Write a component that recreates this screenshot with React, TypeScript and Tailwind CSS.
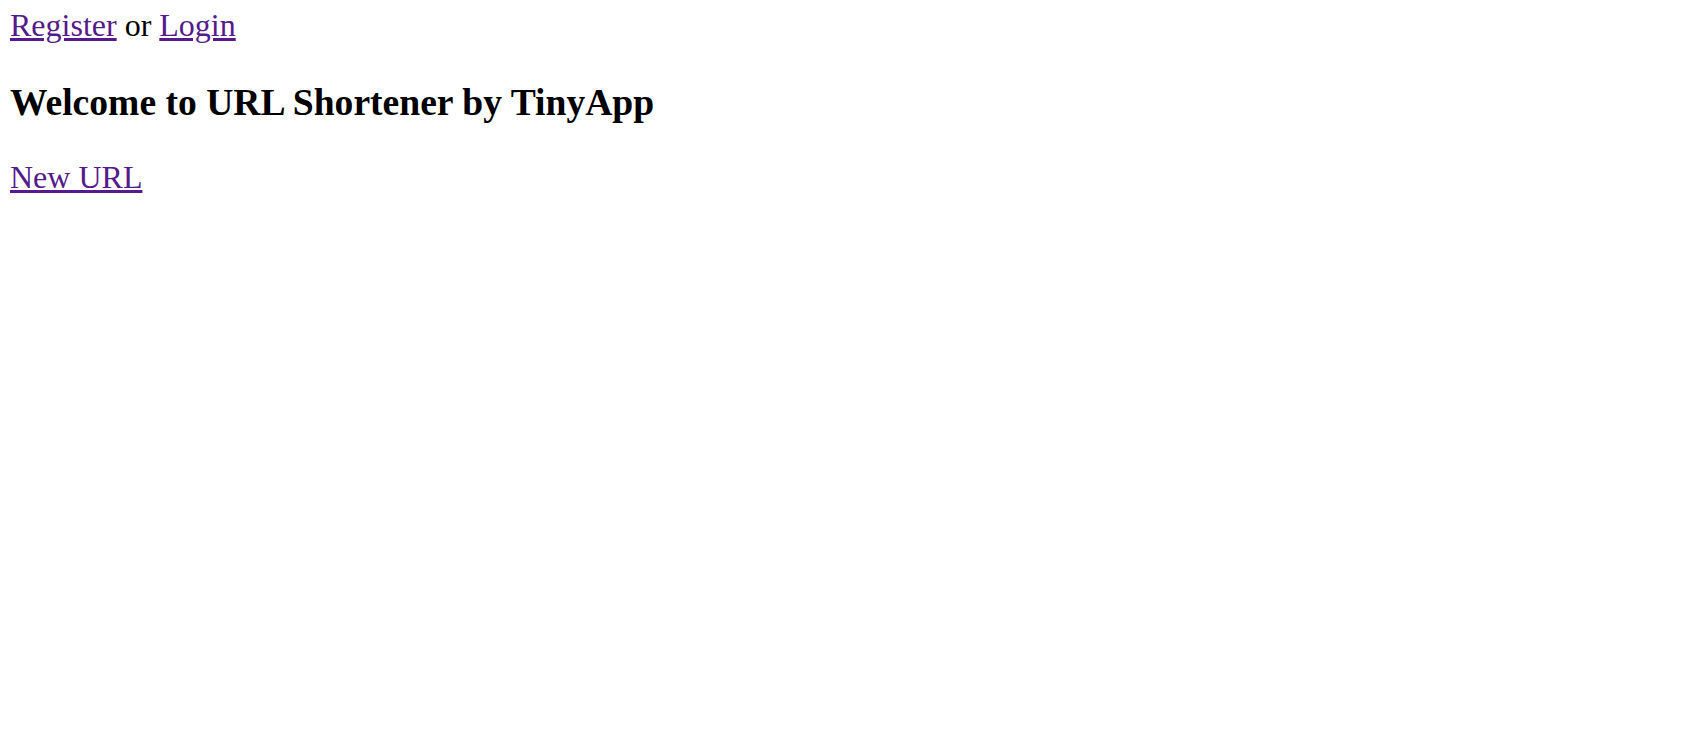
export default function App() {
  return (
    <div className="min-h-screen bg-white pt-[7px] pl-[10px] font-['Liberation_Serif',serif] text-[32px] leading-[normal] text-black">
      <div>
        <a href="#" className="text-[#551a8b] underline">
          Register
        </a>{" "}
        or{" "}
        <a href="#" className="text-[#551a8b] underline">
          Login
        </a>
      </div>
      <h3 className="mt-[37.44px] mb-[35px] text-[37.6px] font-bold">Welcome to URL Shortener by TinyApp</h3>
      <div>
        <a href="#" className="text-[#551a8b] underline">
          New URL
        </a>
      </div>
    </div>
  );
}
